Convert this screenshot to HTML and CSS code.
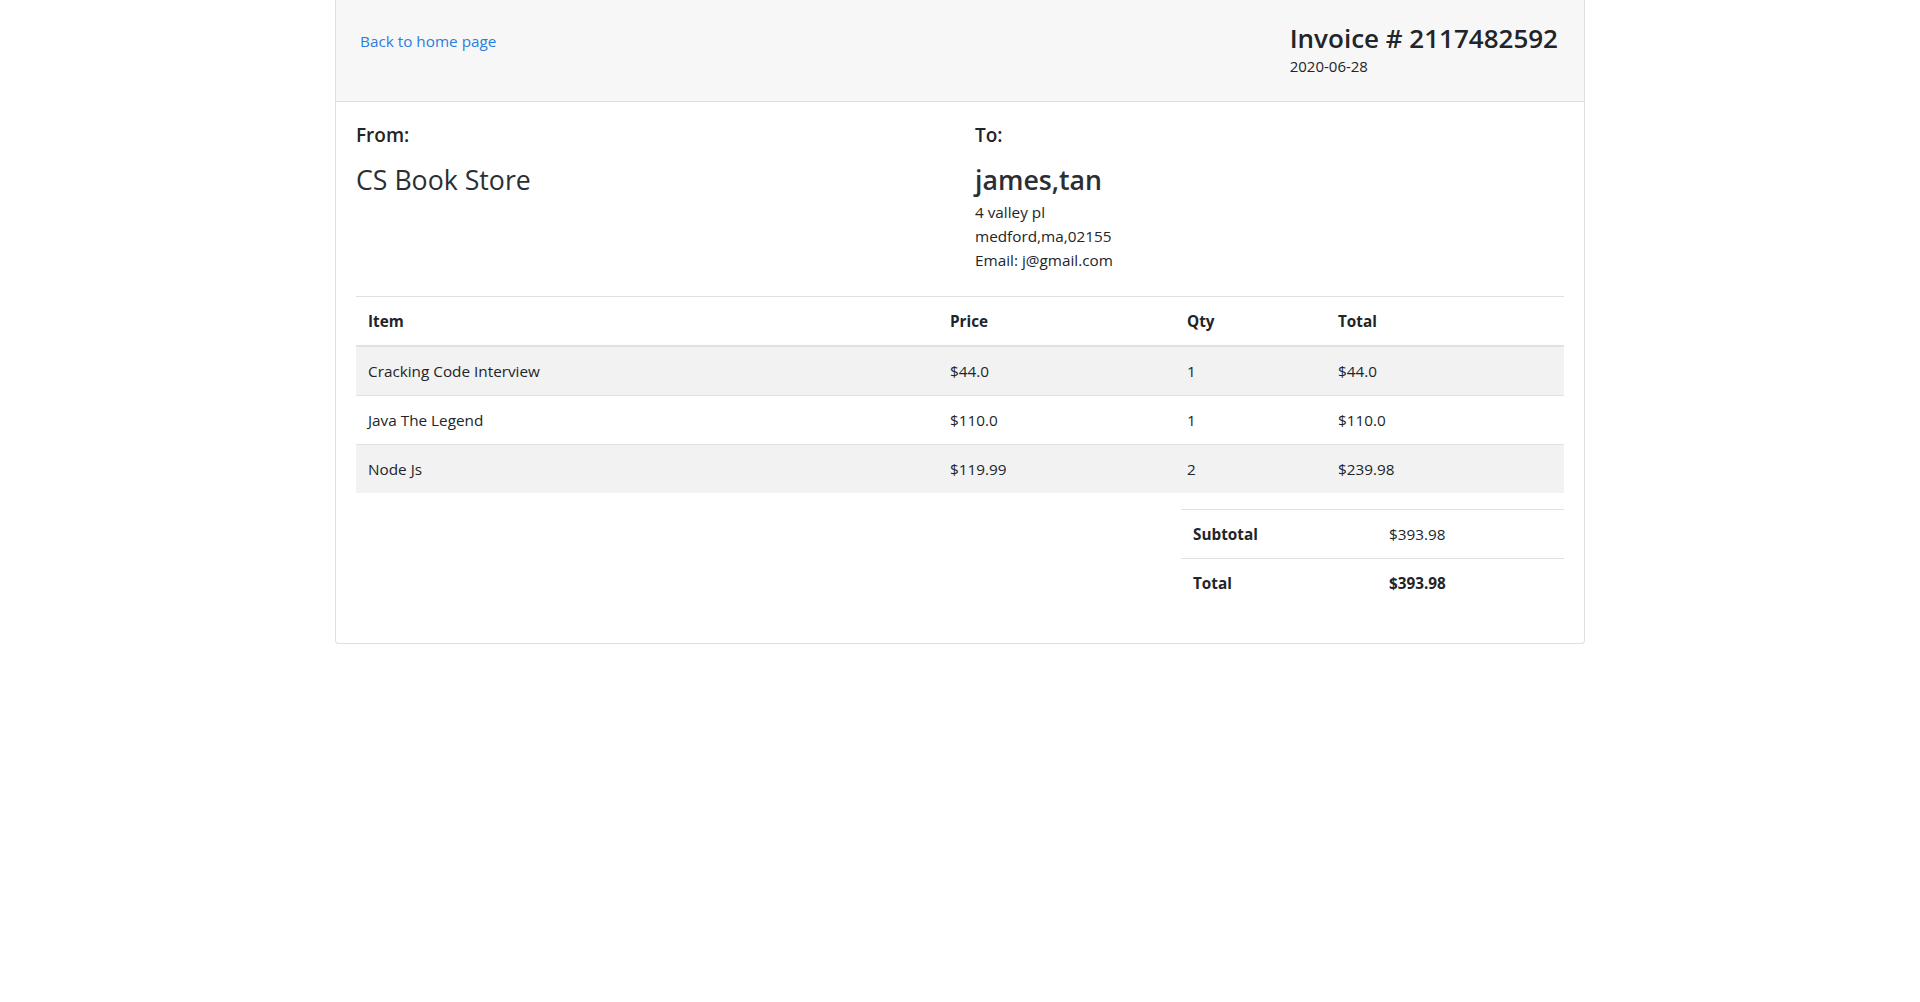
FILE: index.html
```html
<!DOCTYPE html>
<html lang="en">
<head>
<meta charset="utf-8">
<title>Invoice</title>
<link rel="stylesheet" href="styles.css">
</head>
<body>
<div class="card">
  <div class="card-header">
    <a class="back-link" href="#">Back to home page</a>
    <div class="invoice-meta">
      <h3 class="invoice-title">Invoice # 2117482592</h3>
      <div class="invoice-date">2020-06-28</div>
    </div>
  </div>
  <div class="card-body">
    <div class="parties">
      <div class="party">
        <h5 class="party-label">From:</h5>
        <h3 class="party-name">CS Book Store</h3>
      </div>
      <div class="party">
        <h5 class="party-label">To:</h5>
        <h3 class="party-name party-name-strong">james,tan</h3>
        <div class="party-line">4 valley pl</div>
        <div class="party-line">medford,ma,02155</div>
        <div class="party-line">Email: j@gmail.com</div>
      </div>
    </div>

    <table class="items">
      <thead>
        <tr>
          <th class="col-item">Item</th>
          <th class="col-price">Price</th>
          <th class="col-qty">Qty</th>
          <th class="col-total">Total</th>
        </tr>
      </thead>
      <tbody>
        <tr class="striped">
          <td>Cracking Code Interview</td>
          <td>$44.0</td>
          <td>1</td>
          <td>$44.0</td>
        </tr>
        <tr>
          <td>Java The Legend</td>
          <td>$110.0</td>
          <td>1</td>
          <td>$110.0</td>
        </tr>
        <tr class="striped">
          <td>Node Js</td>
          <td>$119.99</td>
          <td>2</td>
          <td>$239.98</td>
        </tr>
      </tbody>
    </table>

    <div class="summary-wrap">
      <table class="summary">
        <tbody>
          <tr>
            <td class="summary-label">Subtotal</td>
            <td>$393.98</td>
          </tr>
          <tr>
            <td class="summary-label">Total</td>
            <td class="summary-strong">$393.98</td>
          </tr>
        </tbody>
      </table>
    </div>
  </div>
</div>
</body>
</html>
```

FILE: styles.css
```css
* {
  box-sizing: border-box;
}

html, body {
  margin: 0;
  padding: 0;
  background: #ffffff;
}

body {
  font-family: "Open Sans", "Noto Sans", "Liberation Sans", sans-serif;
  font-size: 15.3px;
  line-height: 24px;
  color: #212529;
}

.card {
  width: 1250px;
  margin: 0 auto;
  border: 1px solid #dfdfdf;
  border-top: 0;
  border-radius: 0 0 4px 4px;
  background: #ffffff;
}

.card-header {
  display: flex;
  justify-content: space-between;
  align-items: flex-start;
  height: 102px;
  padding: 22px 26px 0 24px;
  background: #f7f7f7;
  border-bottom: 1px solid #dfdfdf;
}

.back-link {
  margin-top: 7px;
  color: #2b7de0;
  text-decoration: none;
  font-size: 15.3px;
  line-height: 24px;
}

.invoice-meta {
  display: flex;
  flex-direction: column;
}

.invoice-title {
  margin: 0;
  font-size: 26px;
  line-height: 33px;
  font-weight: 600;
  color: #212529;
}

.invoice-date {
  font-size: 15px;
  line-height: 22px;
  color: #212529;
}

.card-body {
  padding: 21px 20px 20px;
}

.parties {
  display: grid;
  grid-template-columns: 1fr 1fr;
  column-gap: 30px;
  margin-bottom: 24px;
}

.party-label {
  margin: 0 0 16px 0;
  font-size: 19px;
  line-height: 24px;
  font-weight: 600;
}

.party-name {
  margin: 0 0 8px 0;
  font-size: 26.7px;
  line-height: 33.6px;
  font-weight: 400;
  color: #2b2f33;
}

.party-name-strong {
  margin-bottom: 3px;
  font-weight: 600;
}

.party-line {
  line-height: 24px;
}

.items,
.summary {
  width: 100%;
  border-collapse: collapse;
  margin-bottom: 16px;
}

.items th,
.items td,
.summary td {
  padding: 12px;
  text-align: left;
  vertical-align: top;
  border-top: 1px solid #dee2e6;
  line-height: 24px;
}

.items th {
  font-weight: 700;
  border-bottom: 2px solid #dee2e6;
}

.col-item { width: 582px; }
.col-price { width: 237px; }
.col-qty { width: 151px; }
.col-total { width: 238px; }

.items tr.striped td {
  background: #f2f2f2;
}

.summary-wrap {
  display: flex;
  justify-content: flex-end;
}

.summary {
  width: 383px;
}

.summary-label {
  width: 196px;
  font-weight: 700;
}

.summary-strong {
  font-weight: 700;
}
```
